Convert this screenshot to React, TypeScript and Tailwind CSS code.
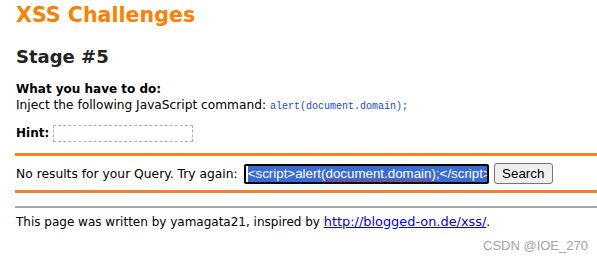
export default function App() {
  return (
    <div className="relative h-[261px] w-[597px] overflow-hidden bg-white pl-[15px] font-['DejaVu_Sans',Verdana,sans-serif] text-[12px] text-black">
      <h1 className="mt-[3px] pl-[1px] text-[20.6px] font-bold leading-[24px] text-[#ff7f00]">XSS Challenges</h1>
      <h2 className="mt-[19px] pl-[1px] text-[18px] font-bold leading-[22px] text-[#222]">Stage #5</h2>

      <div className="mt-[13px] pl-[1px] font-bold leading-[16px]">What you have to do:</div>
      <div className="pl-[1px] text-[12.2px] leading-[16px]">
        Inject the following JavaScript command:{" "}
        <span className="font-['Liberation_Mono',monospace] text-[10px] text-[#1d47c9]">alert(document.domain);</span>
      </div>

      <div className="mt-[10px] flex h-[17px] items-center pl-[1px]">
        <span className="font-bold leading-[17px]">Hint:</span>
        <div className="ml-[4px] h-[17px] w-[140px] border border-dashed border-[#b0b0b0]" />
      </div>

      <div className="mt-[11px] h-[3px] bg-[#f5841f]" />

      <div className="mt-[7px] flex h-[21px] items-center pl-[1px]">
        <span className="text-[12.3px] leading-[16px]">No results for your Query. Try again:</span>
        <div className="ml-[6px] flex h-[20px] w-[245px] items-center overflow-hidden whitespace-nowrap rounded-[2px] border-2 border-black pl-[2px] font-['Liberation_Sans',Arial,sans-serif] text-[13.333px] leading-[16px]">
          <span className="bg-[#3a6bd4] text-white">
            &lt;script&gt;alert(
            <span className="underline decoration-[#e0202a] decoration-dashed underline-offset-[2px]">document.domain)</span>
            ;&lt;/script&gt;
          </span>
        </div>
        <button className="ml-[5px] flex h-[21px] w-[59px] items-center justify-center rounded-[3px] border border-[#767676] bg-[#efefef] font-['Liberation_Sans',Arial,sans-serif] text-[13.333px] leading-[16px] text-black">
          Search
        </button>
      </div>

      <div className="mt-[6px] h-[3px] bg-[#f5841f]" />

      <div className="mt-[13px] h-[2px] bg-[#a8a8a8]" />

      <p className="mt-[6px] pl-[1px] leading-[16px]">
        This page was written by yamagata21, inspired by{" "}
        <a href="#" className="text-[12.9px] text-[#0000ee] underline">http://blogged-on.de/xss/</a>.
      </p>

      <div className="absolute left-[483px] top-[238px] font-['Liberation_Sans',Arial,sans-serif] text-[13px] leading-[15px] text-[#a3a3a3]">
        CSDN @IOE_270
      </div>
    </div>
  );
}
